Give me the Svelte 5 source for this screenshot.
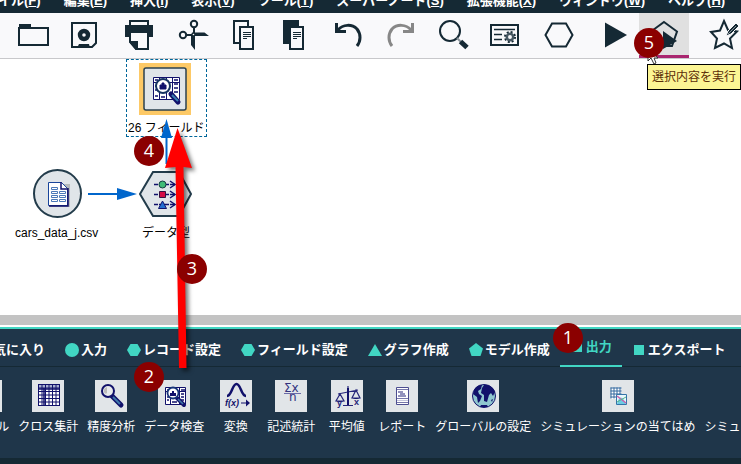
<script>
  const menus = [
    ['ファイル', 'F'], ['編集', 'E'], ['挿入', 'I'], ['表示', 'V'], ['ツール', 'T'],
    ['スーパーノード', 'S'], ['拡張機能', 'X'], ['ウィンドウ', 'W'], ['ヘルプ', 'H']
  ];

  const toolGroups = [
    [['open', '開く'], ['save', '保存']],
    [['print', '印刷']],
    [['cut', '切り取り'], ['copy', 'コピー'], ['paste', '貼り付け']],
    [['undo', '元に戻す'], ['redo', 'やり直し']],
    [['search', '検索'], ['props', 'プロパティ']],
    [['hex', 'ノード']],
    [['play', '実行'], ['runsel', '選択内容を実行']],
    [],
    [['star', 'お気に入り']]
  ];

  const tabs = [
    ['none', 'お気に入り'], ['circle', '入力'], ['hex', 'レコード設定'], ['hex', 'フィールド設定'],
    ['triangle', 'グラフ作成'], ['pentagon', 'モデル作成'], ['square', '出力'], ['square', 'エクスポート']
  ];
  let active = $state('出力');

  const nodes = [
    ['table', 'テーブル'], ['matrix', 'クロス集計'], ['analysis', '精度分析'], ['audit', 'データ検査'],
    ['transform', '変換'], ['stats', '記述統計'], ['means', '平均値'], ['report', 'レポート'],
    ['globe', 'グローバルの設定'], ['simfit', 'シミュレーションの当てはめ'], ['simfit', 'シミュレーションの評価']
  ];

  const grid = [0, 1, 2, 3, 4, 5, 6];
</script>

{#snippet toolIcon(name)}
  <svg class="tool-icon" viewBox="0 0 50 45" aria-hidden="true">
    {#if name === 'open'}
      <path d="M10 11h12v5H10z" fill="#152934" /><path d="M10 15h29v17H10z" class="line" />
    {:else if name === 'save'}
      <path d="M13 10h24v20l-4 4H13z" class="line" />
      <circle cx="25" cy="22" r="4" fill="none" stroke="#152934" stroke-width="4.4" />
      <path d="M20 31h10l1 4H18z" fill="#152934" />
    {:else if name === 'print'}
      <path d="M16 8h18v6H16z" class="line" /><path d="M11 12h28v12H11z" fill="#152934" />
      <path d="M16 19h18v17H22l-6-7z" fill="#f9f9fb" stroke="#152934" stroke-width="2" />
      <path d="M15 28h9v9h-2l-7-8z" fill="#152934" />
    {:else if name === 'cut'}
      <circle cx="25" cy="11" r="3.2" class="line" /><circle cx="14" cy="22" r="3.2" class="line" />
      <path d="M25 14v8M17 22h8" class="line" />
      <path d="M23 19.500h12.500l4.500 3.500H26v14l-4-5V22z" fill="#152934" /><circle cx="24.500" cy="21.500" r="0.8" fill="#fff" />
    {:else if name === 'copy' || name === 'paste'}
      <path d="M15 8h14v22H15z" fill={name === 'paste' ? '#152934' : '#f9f9fb'} stroke="#152934" stroke-width="2" />
      <path d="M21 14h13v22H21z" fill="#f9f9fb" stroke="#152934" stroke-width="2" />
      <path d="M24 19.500h8M24 21.500h8M24 23.500h8M24 25.500h4" stroke="#152934" stroke-width="1" />
    {:else if name === 'undo' || name === 'redo'}
      <g transform={name === 'redo' ? 'matrix(-1 0 0 1 51 0)' : null} fill="none" stroke={name === 'redo' ? '#878787' : '#152934'}>
        <path d="M14 17C19 11 28 11 33 16C37 21 37 28 33 33" stroke-width="3" />
        <path d="M12.500 10v8.500H22" stroke-width="3" />
      </g>
    {:else if name === 'search'}
      <circle cx="21" cy="18" r="10" class="line" /><path d="M28 25l4 4" stroke="#879097" stroke-width="2" />
      <path d="M31.500 28.500l6.500 6" stroke="#152934" stroke-width="5" />
    {:else if name === 'props'}
      <path d="M12 12h27v20H12z" class="line" /><path d="M15 16.500h21M15 21.500h8M15 26.500h8" stroke="#152934" stroke-width="1.300" />
      <circle cx="31" cy="24" r="5" fill="none" stroke="#152934" stroke-width="2" stroke-dasharray="2 1.930" />
      <circle cx="31" cy="24" r="3.200" fill="none" stroke="#465762" stroke-width="2.500" />
    {:else if name === 'hex'}
      <path d="M11.500 22l6.500-11.500h14L38.500 22 32 33.500H18z" class="line" />
    {:else if name === 'play'}
      <path d="M16 9.500L38 22 16 34.500z" fill="#152934" />
    {:else if name === 'runsel'}
      <path d="M25 9l13 9.500-5 14.500H17L12 18.500z" class="line" /><path d="M24 18l14 10-14 8z" fill="#152934" />
    {:else if name === 'star'}
      <path d="M25 8l4 9 9 1.500-7 7 2 9.500-8-4.500-9 4.500 2-9.500-6-6.500 9-1.500z" class="line" />
      <path d="M27 23l2-5 8-8 3 3-8 8z" fill="#152934" stroke="#f9f9fb" stroke-width="1" />
      <path d="M29 21l8-8" stroke="#8b969d" stroke-width="1" />
    {/if}
  </svg>
{/snippet}

{#snippet tabIcon(name)}
  <svg class="tab-icon" viewBox="0 0 14 14" aria-hidden="true">
    {#if name === 'circle'}
      <circle cx="7" cy="7" r="7" />
    {:else if name === 'hex'}
      <path d="M0 7l3.500-6h7L14 7l-3.500 6h-7z" />
    {:else if name === 'triangle'}
      <path d="M7 1l7 12H0z" />
    {:else if name === 'pentagon'}
      <path d="M7 0l7 5.500L11.500 13h-9L0 5.500z" />
    {:else if name === 'square'}
      <path d="M2 2h10v10H2z" />
    {/if}
  </svg>
{/snippet}

{#snippet nodeIcon(name)}
  <svg class="node-icon" viewBox="0 0 32 32" aria-hidden="true">
    {#if name === 'matrix' || name === 'table'}
      <path d="M6 4h22v22H6z" fill="#fff" />
      <path d="M6 4h22v4H6z" fill="#a9b0d0" />
      {#each grid as i}
        <path d="M{6.5 + i * 3.5} 4v22M6 {4.5 + i * 3.5}h22" stroke="#11116b" stroke-width="1" />
      {/each}
      <path d="M12 8v18M6 9h22" stroke="#11116b" stroke-width="1.500" />
    {:else if name === 'analysis'}
      <path d="M17 16l9 9" stroke="#11116b" stroke-width="5" stroke-linecap="round" />
      <path d="M18 17l7 7" stroke="#3e78aa" stroke-width="2" />
      <circle cx="13" cy="11" r="6" fill="#e8eaec" stroke="#11116b" stroke-width="2" />
      <path d="M12 7a4 4 0 0 0-3 5c1 2 2 2 3 1z" fill="#bbb" />
    {:else if name === 'audit'}
      <path d="M7.500 7.500h20v17h-20z" fill="#fff" stroke="#11116b" />
      <path d="M7 11.500h21M21.500 8v16M12.500 8v16" stroke="#11116b" stroke-width="1" />
      <path d="M9 10h2M23 10h4M23 14h3M23 17h3M23 20h3M9 14h2M9 17h2M9 20h2M14 22h5" stroke="#11116b" stroke-width="1.500" />
      <path d="M19 18l7 7" stroke="#11116b" stroke-width="4" stroke-linecap="round" />
      <path d="M20 19l5 5" stroke="#3e78aa" stroke-width="1.500" />
      <circle cx="15" cy="13" r="5.500" fill="#fff" stroke="#173479" stroke-width="1.800" />
      <path d="M12 16v-3h2v-2h2v2h2v3z" fill="#11116b" />
    {:else if name === 'transform'}
      <path d="M7 16c5 0 5-12 9.500-12S21 16 26 16" fill="none" stroke="#11116b" stroke-width="2.500" />
      <text x="5" y="26" class="fx">f(x)</text>
      <path d="M21 22.500h5v-3l4 3.500-4 3.500v-3h-5z" fill="#11116b" />
    {:else if name === 'stats'}
      <text x="9" y="12" class="formula">Σx</text><path d="M9 13.500h17" stroke="#6a6aa8" /><text x="14" y="21" class="formula">n</text>
    {:else if name === 'means'}
      <path d="M17 6v19M12 25.500h10M7 14l20-4M9 14l-4 7h8zM25 10l-4 8h8z" fill="none" stroke="#26267a" stroke-width="1.200" />
      <path d="M17 8v17" stroke="#11116b" stroke-width="2" />
      <path d="M5 21h8q-4 2-8 0zM21 18h8q-4 2-8 0z" fill="#11116b" />
      <text x="6" y="26" class="axis">y</text><text x="23" y="25" class="axis">x</text>
    {:else if name === 'report'}
      <path d="M10.500 7.500h12v17h-12z" fill="#fff" stroke="#4c4d90" />
      <path d="M11 9.500h11M11 18.500h11M11 22.500h11" stroke="#7778aa" />
      <path d="M12 12h5M14 14h5M12 16h8" stroke="#26267a" />
      <path d="M11 20.500h11" stroke="#c4c6dc" />
    {:else if name === 'globe'}
      <circle cx="17" cy="16" r="11.500" fill="#8fc7cf" stroke="#11116b" />
      <path d="M7 10c2-4 5-5 8-5l-1 4-3 2 1 3 3 2-2 5-2 2-1-6-4-3zM17 5c5-1 10 3 11 7l-2 4-2-3-2 2-2 7-3-1 0-6-3-2 1-5zM14 25h6l1 2h-8zM24 20l2-1-1 3z" fill="#11116b" />
    {:else if name === 'simfit'}
      <path d="M9 8h10v11H9z" fill="#fff" />
      <path d="M8.500 8h11M8.500 11h11M8.500 14h11M8.500 17h11M9 7.500v11M12 7.500v11M15 7.500v11M18 7.500v11" stroke="#32689f" />
      <path d="M14.500 14.500h10v10h-10z" fill="#e7f7fc" stroke="#3474a8" />
      <path d="M15 24c2-8 5-9 9 0z" fill="#6dcbe4" /><path d="M15 16l9 7" stroke="#cb5faa" stroke-width="1.500" />
      <path d="M15 22l9-5" stroke="#58b484" />
    {/if}
  </svg>
{/snippet}

<div class="app">
  <nav class="menubar">
    {#each menus as [label, key]}
      <button type="button">{label}(<u>{key}</u>)</button>
    {/each}
  </nav>

  <div class="toolbar" role="toolbar" aria-label="ツールバー">
    {#each toolGroups as group}
      <div class="group">
        {#each group as [name, label]}
          <button type="button" class:hovered={name === 'runsel'} aria-label={label}>{@render toolIcon(name)}</button>
        {/each}
      </div>
    {/each}
  </div>

  <main class="canvas">
    <svg class="stream" width="240" height="200" viewBox="0 59 240 200" aria-hidden="true">
      <path d="M139 63h52v52h-52z" fill="#fdc966" />
      <rect x="144" y="68" width="42" height="42" rx="2" fill="#e0e5e9" stroke="#2b4150" stroke-width="1.500" />
      <g stroke="#11116b">
        <path d="M153.500 77.500h26v22h-26z" fill="#fff" />
        <path d="M153 82.500h27M172.500 78v21M159.500 78v21M166.500 78v21" />
        <path d="M155 80h3M174 80h4M174 84h4M174 88h4M174 92h4M155 86h3M155 90h3M155 96h3M161 97h4" stroke-width="1.500" />
        <path d="M171 94l7 8" stroke-width="5" stroke-linecap="round" />
        <path d="M172 95l6 6" stroke="#397cb0" stroke-width="2" />
        <circle cx="163" cy="86" r="7" fill="#fff" stroke="#173462" stroke-width="2" />
        <path d="M160 89v-4h2v-2h2v2h2v4z" fill="#11116b" />
      </g>
      <circle cx="57.500" cy="193.500" r="23.500" fill="#e0e5e9" stroke="#233c4b" stroke-width="2" />
      <path d="M50 184h20v23H50z" fill="#b5b9bc" />
      <path d="M48.500 182.500h13l6 6v17h-19z" fill="#fff" stroke="#19459b" />
      <path d="M61 182v7h7M68 188v18H49" fill="none" stroke="#11116b" stroke-width="1.500" />
      <path d="M51.500 187.500h6v2h-6zM51.500 191.500h6v2h-6zM59.500 191.500h6v2h-6zM51.500 195.500h6v2h-6zM59.500 195.500h6v2h-6zM51.500 199.500h6v2h-6zM59.500 199.500h6v2h-6z" fill="#fff" stroke="#4a78b8" />
      <path d="M153 172h26l12 22-12 22h-26l-13-22z" fill="#e0e5e9" stroke="#233c4b" stroke-width="2" />
      <path d="M154 184.500h21M154 194.500h21M154 204.500h21" stroke="#11116b" stroke-width="1.500" stroke-dasharray="4 1 10 1 5" />
      <path d="M170 181l5 3.500-5 3.500M170 191l5 3.500-5 3.500M170 201l5 3.500-5 3.500" fill="none" stroke="#11116b" stroke-width="1.500" />
      <circle cx="162.500" cy="184.500" r="3.500" fill="#3fbc76" stroke="#153d40" />
      <path d="M159.500 191.500h6v6h-6z" fill="#d40b45" stroke="#35103e" />
      <path d="M162.500 201l4 7.500h-8z" fill="#246ed0" stroke="#11116b" />
    </svg>
    <div class="selection"></div>
    <span class="label audit">26 フィールド</span>
    <span class="label source">cars_data_j.csv</span>
    <span class="label type">データ型</span>
    <svg class="stream" width="240" height="120" viewBox="0 59 240 120" aria-hidden="true">
      <path d="M166.500 164v-28" stroke="#06c" stroke-width="2" />
      <path d="M161 138l5.500-19 5.500 19z" fill="#06c" />
    </svg>
    <svg class="stream" width="240" height="200" viewBox="0 59 240 200" aria-hidden="true">
      <path d="M88 194h32" stroke="#06c" stroke-width="2" />
      <path d="M117 188l20 6-20 6z" fill="#06c" />
    </svg>
  </main>

  <div class="splitter"></div>

  <section class="palette">
    <div class="tabs" role="tablist">
      {#each tabs as [shape, label]}
        <button type="button" role="tab" aria-selected={active === label} class:active={active === label} onclick={() => (active = label)}>
          {@render tabIcon(shape)}<span>{label}</span>
        </button>
      {/each}
    </div>
    <div class="nodes">
      {#each nodes as [icon, label]}
        <button type="button">{@render nodeIcon(icon)}<span>{label}</span></button>
      {/each}
    </div>
  </section>
  <footer></footer>

  <div class="overlay">
    <svg class="drag-arrow" width="60" height="260" viewBox="150 120 60 260" aria-hidden="true">
      <path d="M177.500 128l14.500 40-8.500-1 3 201h-7.500l-3.500-201-10.500 1z" fill="#f00" />
    </svg>
    <svg class="cursor" width="14" height="20" viewBox="0 0 14 20" aria-hidden="true">
      <path d="M1 1v12l3-3 3 6 2-1-2-5h4z" fill="#fff" stroke="#333" />
    </svg>
    <span class="badge b1">1</span>
    <span class="badge b2">2</span>
    <span class="badge b3">3</span>
    <span class="badge b4">4</span>
    <span class="badge b5">5</span>
    <div class="tooltip" role="tooltip">選択内容を実行</div>
  </div>
</div>

<style>
  .app {
    position: relative;
    display: flex;
    flex-direction: column;
    min-height: 100vh;
    overflow: hidden;
    background: #fff;
    font-family: "Liberation Sans", "Noto Sans CJK JP", sans-serif;
    font-size: 12px;
    line-height: 16px;
  }
  button {
    flex: none;
    margin: 0;
    padding: 0;
    border: 0;
    background: none;
    color: inherit;
    font: inherit;
    white-space: nowrap;
  }
  svg { display: block; flex: none; }

  .menubar {
    display: flex;
    align-items: flex-end;
    gap: 23px;
    height: 13px;
    box-sizing: border-box;
    padding-bottom: 4px;
    margin-left: -28px;
    overflow: hidden;
    background: #152934;
    color: #fff;
    font-size: 13px;
    font-weight: bold;
  }

  .toolbar {
    display: flex;
    gap: 5px;
    padding-left: 9px;
    overflow: hidden;
    background: #f9f9fb;
    border-bottom: 1px solid #c8c8cb;
  }
  .group { display: flex; flex: none; }
  .tool-icon { width: 50px; height: 45px; }
  .line { fill: none; stroke: #152934; stroke-width: 2; }
  .hovered { background: #e0e0e0; box-shadow: inset 0 -3px #a9266f; }

  .canvas { position: relative; flex: 1; min-height: 240px; }
  .stream { position: absolute; left: 0; top: 0; }
  .selection {
    position: absolute;
    left: 126px;
    top: 0;
    width: 79px;
    height: 76px;
    border: 1px dashed #069;
  }
  .label { position: absolute; white-space: nowrap; color: #000; }
  .audit { left: 128px; top: 61px; }
  .source { left: 15px; top: 166px; }
  .type { left: 142px; top: 166px; }

  .splitter { height: 10px; margin-bottom: 2px; background: #c3c3c3; }

  .palette { border-top: 2px solid #41d6c3; background: #1f364a; color: #fff; }
  .tabs {
    display: flex;
    justify-content: flex-start;
    height: 38px;
    margin-left: -46px;
    box-shadow: inset 0 -1px #152934;
    font-size: 13px;
    font-weight: bold;
  }
  .tabs button {
    display: flex;
    align-items: center;
    gap: 2px;
    padding: 4px 10px 0;
  }
  .tabs .active { padding-top: 0; border-bottom: 2px solid #41d6c3; color: #41d6c3; }
  .tab-icon { width: 14px; height: 14px; fill: #41d6c3; }

  .nodes {
    display: flex;
    gap: 9px;
    margin-left: -38px;
    padding: 13px 0 23px;
    overflow: hidden;
  }
  .nodes button {
    display: flex;
    flex-direction: column;
    align-items: center;
    gap: 7px;
    min-width: 45px;
  }
  .node-icon { width: 32px; height: 32px; background: #e1e5e8; }
  .fx { font: italic bold 9px "Liberation Sans", sans-serif; fill: #11116b; }
  .formula { font: 12px "DejaVu Sans", sans-serif; fill: #33337f; }
  .axis { font: bold 9px "Liberation Sans", sans-serif; fill: #26267a; }

  footer { height: 6px; background: #152934; }

  .overlay { position: absolute; inset: 0; pointer-events: none; }
  .drag-arrow { position: absolute; left: 150px; top: 120px; filter: drop-shadow(3px 3px 2px #0008); }
  .cursor { position: absolute; left: 647px; top: 48px; }
  .badge {
    position: absolute;
    width: 30px;
    height: 30px;
    border-radius: 50%;
    background: #8b0000;
    color: #fff;
    font: 18px/28px "Open Sans", sans-serif;
    text-align: center;
  }
  .b1 { left: 553px; top: 323px; }
  .b2 { left: 134px; top: 362px; }
  .b3 { left: 177px; top: 254px; }
  .b4 { left: 134px; top: 136px; }
  .b5 { left: 634px; top: 28px; }
  .tooltip {
    position: absolute;
    left: 647px;
    top: 64px;
    padding: 4px;
    border: 1px solid #000;
    background: #fcf594;
    color: #5b2d08;
    white-space: nowrap;
  }
</style>
